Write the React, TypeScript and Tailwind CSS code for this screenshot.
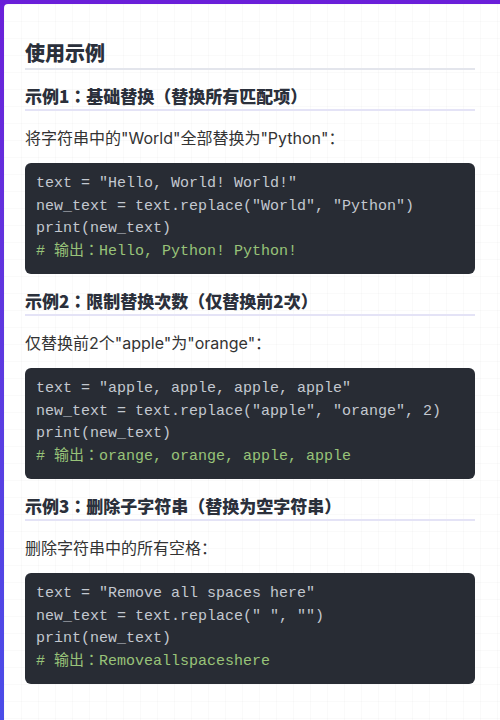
const code1 = [
  'text = "Hello, World! World!"',
  'new_text = text.replace("World", "Python")',
  "print(new_text)",
];
const code2 = [
  'text = "apple, apple, apple, apple"',
  'new_text = text.replace("apple", "orange", 2)',
  "print(new_text)",
];
const code3 = [
  'text = "Remove all spaces here"',
  'new_text = text.replace(" ", "")',
  "print(new_text)",
];

function CodeBlock({ lines, output }: { lines: string[]; output: string }) {
  return (
    <pre className="mt-[13px] rounded-[6px] bg-[#282c34] px-[11px] pt-[10px] pb-[11px] font-['Liberation_Mono','Noto_Sans_CJK_TC',monospace] text-[15px] leading-[22.5px] text-[#c3c8d0] whitespace-pre">
      {lines.map((l) => (
        <div key={l}>{l}</div>
      ))}
      <div className="text-[#98c379]"># 输出：{output}</div>
    </pre>
  );
}

function SubTitle({ children, first }: { children: React.ReactNode; first?: boolean }) {
  return (
    <h3
      className={
        (first ? "mt-[14px] " : "mt-[15px] ") +
        "border-b-2 border-[#e4e3f6] pb-[1px] font-['Noto_Sans_CJK_TC',sans-serif] text-[17px] leading-[24px] font-black text-[#2b303b]"
      }
    >
      {children}
    </h3>
  );
}

function Para({ children }: { children: React.ReactNode }) {
  return <p className="mt-[15px] text-[16px] leading-[24px] text-[#333]">{children}</p>;
}

export default function App() {
  return (
    <main className="min-h-[720px] bg-gradient-to-b from-[#6a1fd9] to-[#4a4ce8] pl-[4px] pt-[4px] font-['Inter','Noto_Sans_CJK_SC',sans-serif]">
      <div className="min-h-[716px] rounded-tl-[4px] bg-white bg-[linear-gradient(rgba(0,0,0,0.018)_1px,transparent_1px),linear-gradient(90deg,rgba(0,0,0,0.018)_1px,transparent_1px)] bg-[size:17px_17px] pl-[21px] pr-[25px] pt-[35px] pb-[20px]">
        <h2 className="border-b-2 border-[#e3e5ec] pb-[1px] font-['Noto_Sans_CJK_SC',sans-serif] text-[20px] leading-[28px] font-black text-[#2b303b]">
          使用示例
        </h2>

        <SubTitle first>示例1：基础替换（替换所有匹配项）</SubTitle>
        <Para>将字符串中的"World"全部替换为"Python"：</Para>
        <CodeBlock lines={code1} output="Hello, Python! Python!" />

        <SubTitle>示例2：限制替换次数（仅替换前2次）</SubTitle>
        <Para>仅替换前2个"apple"为"orange"：</Para>
        <CodeBlock lines={code2} output="orange, orange, apple, apple" />

        <SubTitle>示例3：删除子字符串（替换为空字符串）</SubTitle>
        <Para>删除字符串中的所有空格：</Para>
        <CodeBlock lines={code3} output="Removeallspaceshere" />
      </div>
    </main>
  );
}
